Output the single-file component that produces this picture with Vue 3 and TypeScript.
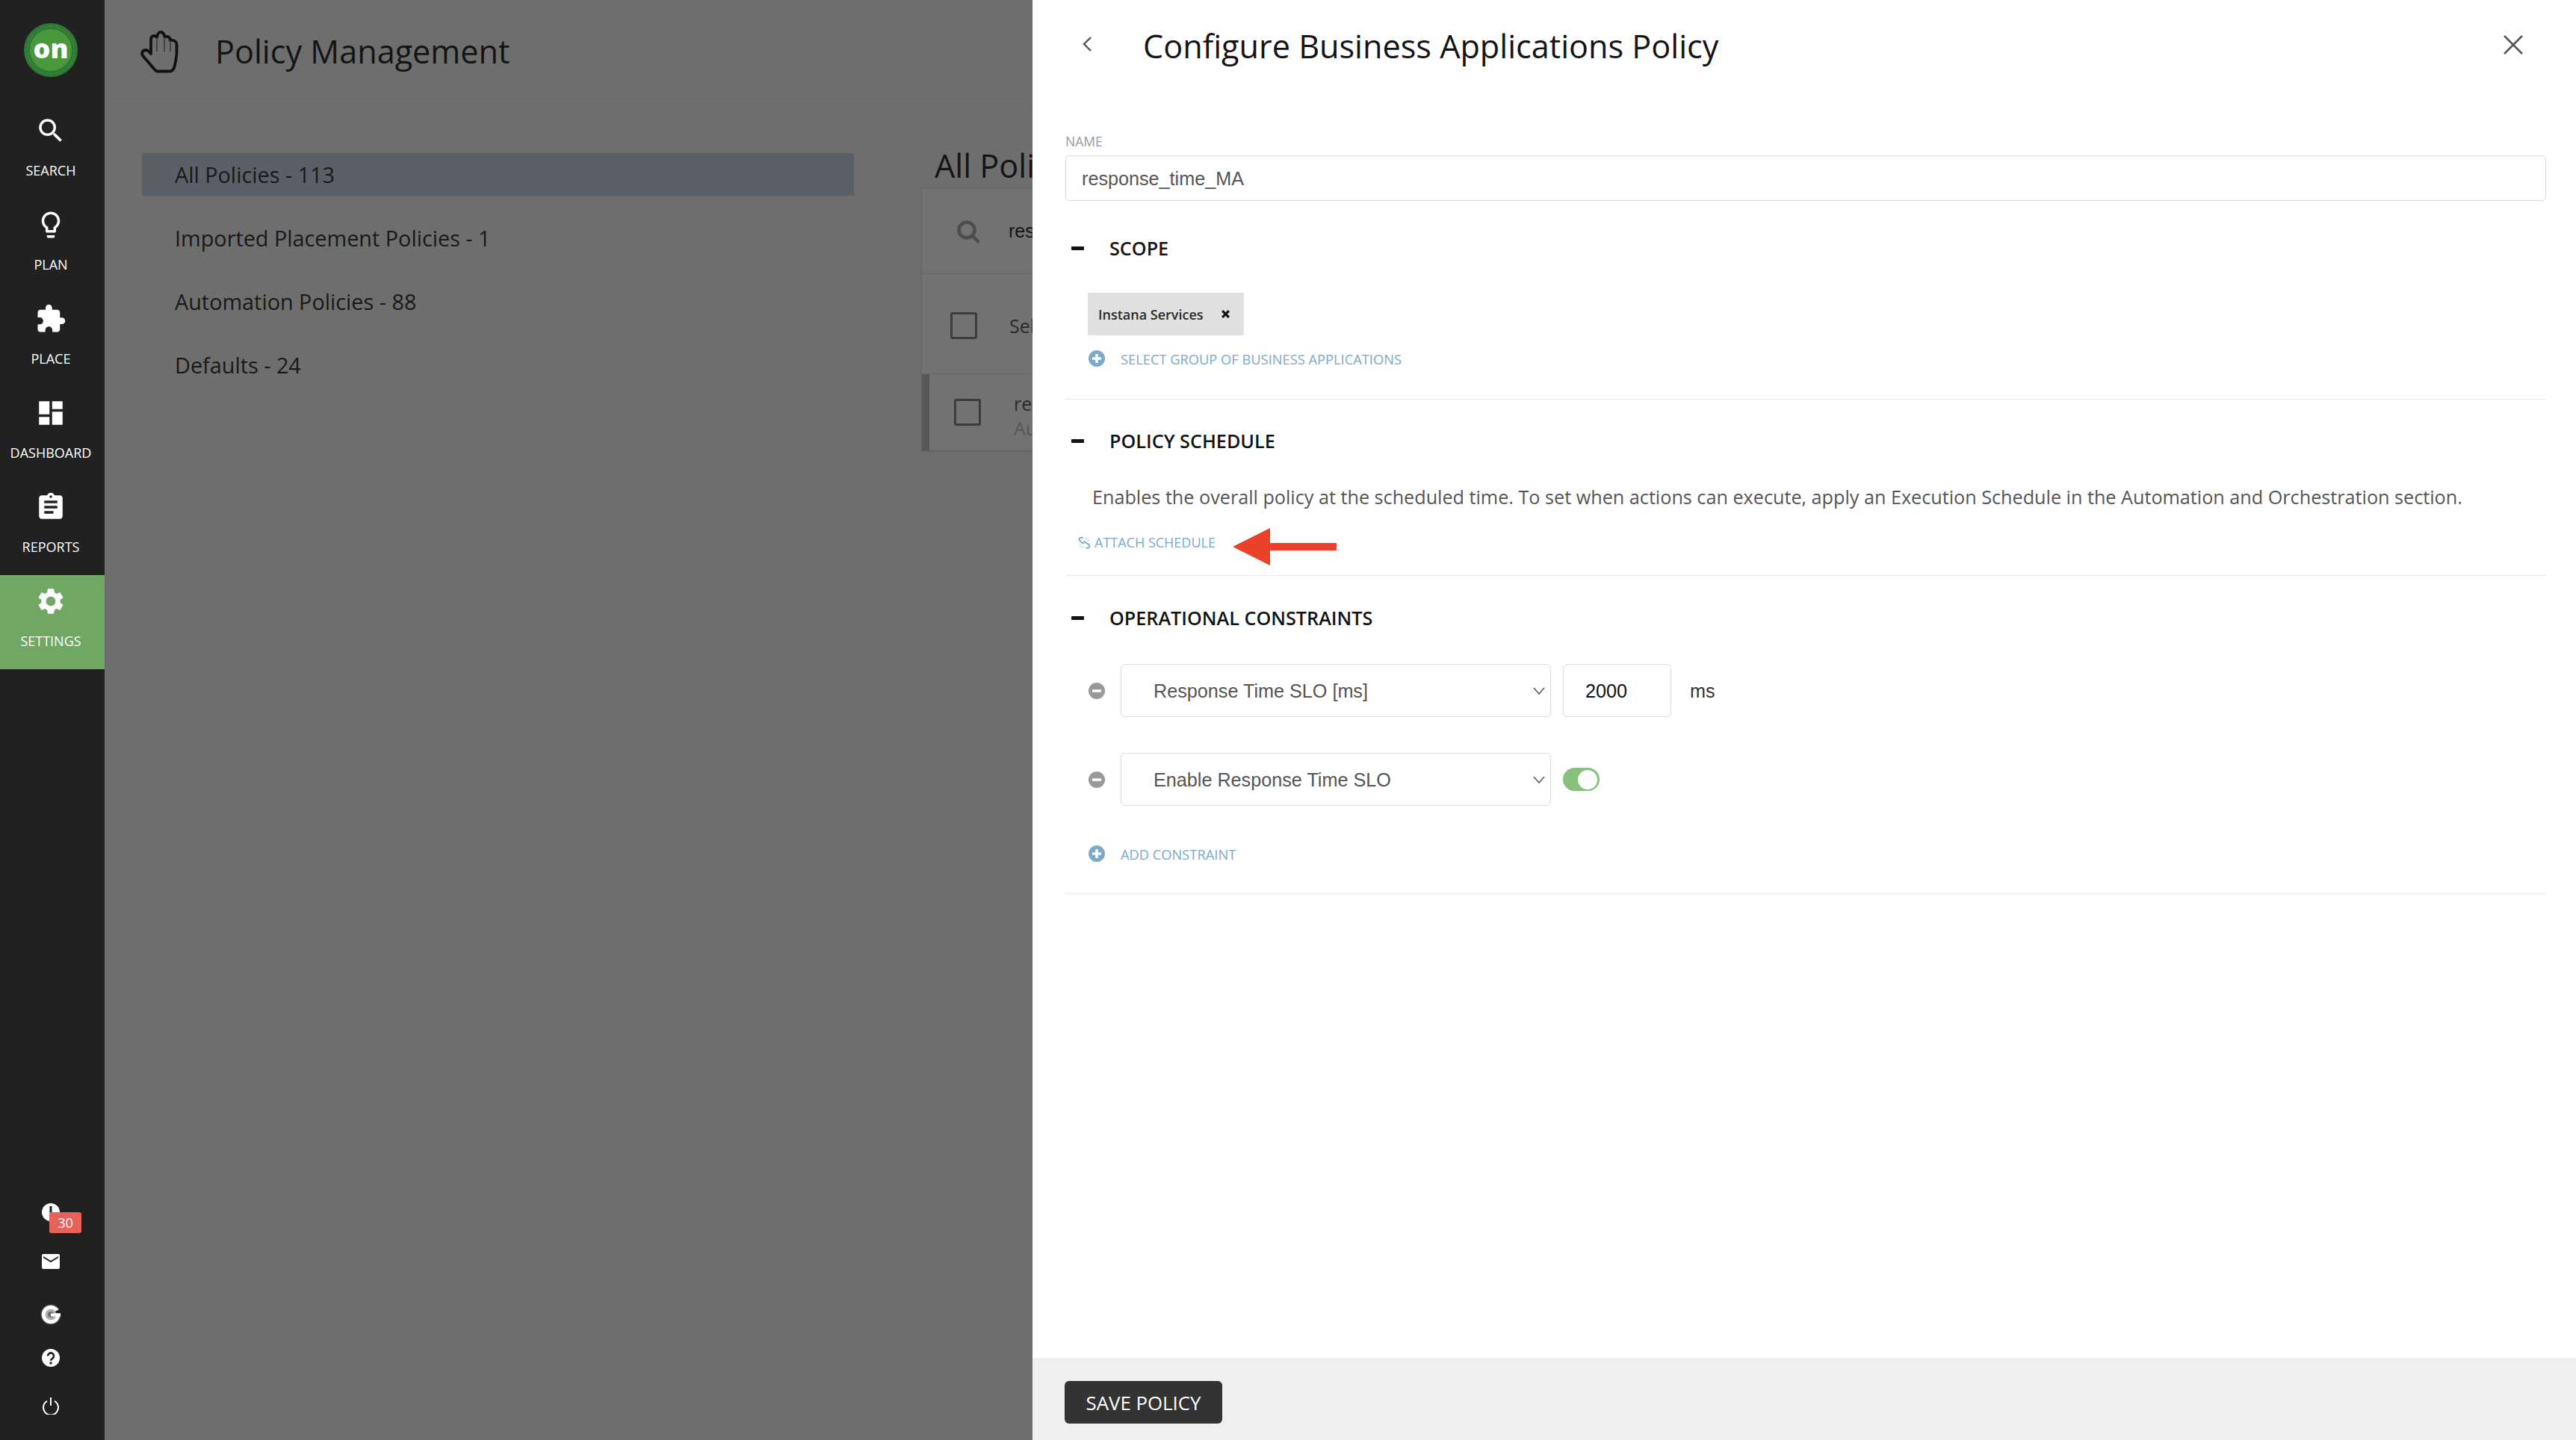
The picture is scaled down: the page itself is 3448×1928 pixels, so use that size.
<script setup lang="ts">
const navItems = [
  { label: 'SEARCH', d: 'M15.5 14h-.79l-.28-.27A6.471 6.471 0 0 0 16 9.5 6.5 6.5 0 1 0 9.5 16c1.61 0 3.09-.59 4.23-1.57l.27.28v.79l5 4.99L20.49 19l-4.99-5zm-6 0C7.01 14 5 11.99 5 9.5S7.01 5 9.5 5 14 7.01 14 9.5 11.99 14 9.5 14z' },
  { label: 'PLAN', d: 'M9 21c0 .55.45 1 1 1h4c.55 0 1-.45 1-1v-1H9v1zm3-19C8.14 2 5 5.14 5 9c0 2.38 1.19 4.47 3 5.74V17c0 .55.45 1 1 1h6c.55 0 1-.45 1-1v-2.26c1.81-1.27 3-3.36 3-5.74 0-3.86-3.14-7-7-7zm2.85 11.1l-.85.6V16h-4v-2.3l-.85-.6A4.997 4.997 0 0 1 7 9c0-2.76 2.24-5 5-5s5 2.24 5 5c0 1.63-.8 3.16-2.15 4.1z' },
  { label: 'PLACE', d: 'M20.5 11H19V7c0-1.1-.9-2-2-2h-4V3.5C13 2.12 11.88 1 10.5 1S8 2.12 8 3.5V5H4c-1.1 0-1.99.9-1.99 2v3.8H3.5c1.49 0 2.7 1.21 2.7 2.7s-1.21 2.7-2.7 2.7H2V20c0 1.1.9 2 2 2h3.8v-1.5c0-1.49 1.21-2.7 2.7-2.7 1.49 0 2.7 1.21 2.7 2.7V22H17c1.1 0 2-.9 2-2v-4h1.5c1.38 0 2.5-1.12 2.5-2.5S21.88 11 20.5 11z' },
  { label: 'DASHBOARD', d: 'M3 13h8V3H3v10zm0 8h8v-6H3v6zm10 0h8V11h-8v10zm0-18v6h8V3h-8z' },
  { label: 'REPORTS', d: 'M19 3h-4.18C14.4 1.84 13.3 1 12 1c-1.3 0-2.4.84-2.82 2H5c-1.1 0-2 .9-2 2v14c0 1.1.9 2 2 2h14c1.1 0 2-.9 2-2V5c0-1.1-.9-2-2-2zm-7 0c.55 0 1 .45 1 1s-.45 1-1 1-1-.45-1-1 .45-1 1-1zm2 14H7v-2h7v2zm3-4H7v-2h10v2zm0-4H7V7h10v2z' },
  { label: 'SETTINGS', active: true, d: 'M19.14 12.94c.04-.3.06-.61.06-.94 0-.32-.02-.64-.07-.94l2.03-1.58c.18-.14.23-.41.12-.61l-1.92-3.32c-.12-.22-.37-.29-.59-.22l-2.39.96c-.5-.38-1.03-.7-1.62-.94l-.36-2.54c-.04-.24-.24-.41-.48-.41h-3.84c-.24 0-.43.17-.47.41l-.36 2.54c-.59.24-1.13.57-1.62.94l-2.39-.96c-.22-.08-.47 0-.59.22L2.74 8.87c-.12.21-.08.47.12.61l2.03 1.58c-.05.3-.09.63-.09.94s.02.64.07.94l-2.03 1.58c-.18.14-.23.41-.12.61l1.92 3.32c.12.22.37.29.59.22l2.39-.96c.5.38 1.03.7 1.62.94l.36 2.54c.05.24.24.41.48.41h3.84c.24 0 .44-.17.47-.41l.36-2.54c.59-.24 1.13-.56 1.62-.94l2.39.96c.22.08.47 0 .59-.22l1.92-3.32c.12-.22.07-.47-.12-.61l-2.01-1.58zM12 15.6c-1.98 0-3.6-1.62-3.6-3.6s1.62-3.6 3.6-3.6 3.6 1.62 3.6 3.6-1.62 3.6-3.6 3.6z' },
];

const policyGroups = [
  { label: 'All Policies - 113', selected: true },
  { label: 'Imported Placement Policies - 1' },
  { label: 'Automation Policies - 88' },
  { label: 'Defaults - 24' },
];
</script>

<template>
  <div class="page">
    <nav class="sidebar">
      <div class="logo-wrap">
        <div class="logo"><span class="logo-text">on</span></div>
      </div>
      <a v-for="item in navItems" :key="item.label" class="nav-item" :class="{ active: item.active }">
        <svg class="nav-icon" viewBox="0 0 24 24"><path :d="item.d" fill="#fff" /></svg>
        <span class="nav-label">{{ item.label }}</span>
      </a>
      <div class="side-bottom">
        <div class="side-icon clock">
          <svg viewBox="0 0 24 24" width="24" height="24">
            <circle cx="12" cy="12" r="12" fill="#fff" />
            <rect x="10.5" y="4" width="3" height="9" fill="#212121" />
          </svg>
          <span class="badge">30</span>
        </div>
        <div class="side-icon mail">
          <svg viewBox="0 0 24 20" width="24" height="20">
            <rect width="24" height="20" rx="2" fill="#fff" />
            <path d="M2 4l10 6 10-6" fill="none" stroke="#212121" stroke-width="2" />
          </svg>
        </div>
        <div class="side-icon grammar">
          <svg viewBox="0 0 28 28" width="28" height="28">
            <circle cx="14" cy="14" r="13.5" fill="#555" />
            <circle cx="14" cy="14" r="12.2" fill="#fff" />
            <path d="M17 11L28 6v6.500H17z" fill="#212121" />
            <circle cx="14" cy="14" r="7.500" fill="#b0b0b0" />
            <circle cx="14" cy="14" r="4" fill="#6e6e6e" />
            <rect x="14" y="12.500" width="13" height="4" fill="#fff" />
          </svg>
        </div>
        <div class="side-icon help">
          <svg viewBox="0 0 24 24" width="24" height="24">
            <circle cx="12" cy="12" r="12" fill="#fff" />
            <path d="M8 9.5a4 4 0 1 1 6.2 3.3c-1.4.9-2.2 1.5-2.2 3" fill="none" stroke="#212121" stroke-width="2.6" />
            <rect x="10.5" y="17.5" width="3" height="3" fill="#212121" />
          </svg>
        </div>
        <div class="side-icon power">
          <svg viewBox="0 0 24 24" width="24" height="24">
            <path d="M7 5.8a10 10 0 1 0 10 0" fill="none" stroke="#fff" stroke-width="2" />
            <path d="M12 1v11" fill="none" stroke="#fff" stroke-width="2" />
          </svg>
        </div>
      </div>
    </nav>

    <main class="main">
      <header class="main-header">
        <svg class="hand" viewBox="0 0 52 57" width="52" height="57">
          <path
            d="M19 51L4.500 34C2.500 31.500 2.500 28.500 5 27c2.500-1.500 5.500-1 8 1.500l2 2.500V11c0-2.500 2-4 4-4 1.500 0 3 .5 4 2 .5-4 2.500-7 5-7 3 0 5 2.500 5 6 1-.5 2.500 0 3.500 0 2.500 0 4 2 4.500 5 1-.5 2-.5 3.500 0 3 .5 5 3 5 6v9c0 8-1.500 14-3 20-1 4-2.500 6.500-6.500 6.500H24c-2 0-3.500-1.500-5-3.500z"
            fill="none" stroke="#111" stroke-width="3.800" stroke-linejoin="round"
          />
          <path d="M23 9v19M33 8v20M41 13v15" fill="none" stroke="#333" stroke-width="1.400" />
        </svg>
        <h1 class="main-title">Policy Management</h1>
      </header>
      <div class="main-body">
        <ul class="groups">
          <li v-for="group in policyGroups" :key="group.label" class="group" :class="{ selected: group.selected }">
            {{ group.label }}
          </li>
        </ul>
        <!-- the drawer covers the rest of this list, only the visible start of each text is kept -->
        <section class="policies">
          <h2 class="policies-title">All Poli</h2>
          <div class="card">
            <div class="card-search">
              <svg viewBox="0 0 30 30" width="30" height="30">
                <circle cx="13" cy="13" r="10.500" fill="none" stroke="#4c4c4c" stroke-width="4.500" />
                <path d="M20.500 20.500L28 28" stroke="#4c4c4c" stroke-width="4.500" stroke-linecap="round" />
              </svg>
              <span class="search-text">res</span>
            </div>
            <div class="card-select">
              <span class="checkbox"></span>
              <span class="select-text">Sel</span>
            </div>
            <div class="card-row">
              <span class="checkbox"></span>
              <div class="row-text">
                <span class="row-name">re</span>
                <span class="row-type">Au</span>
              </div>
            </div>
          </div>
        </section>
      </div>
    </main>

    <aside class="panel">
      <header class="panel-header">
        <svg class="back" viewBox="0 0 14 22" width="14" height="22">
          <path d="M12 2L3 11l9 9" fill="none" stroke="#555" stroke-width="2.400" />
        </svg>
        <h2 class="panel-title">Configure Business Applications Policy</h2>
        <svg class="close" viewBox="0 0 28 28" width="28" height="28">
          <path d="M2 2l24 24M26 2L2 26" fill="none" stroke="#555" stroke-width="2.600" />
        </svg>
      </header>

      <div class="panel-body">
        <label class="field-label">NAME</label>
        <input class="name-input" type="text" value="response_time_MA" />

        <section class="section scope">
          <h3 class="section-head"><span class="minus"></span>SCOPE</h3>
          <div class="chip">
            <span>Instana Services</span>
            <svg viewBox="0 0 12 12" width="13" height="13">
              <path d="M2 2l8 8M10 2l-8 8" fill="none" stroke="#111" stroke-width="3" />
            </svg>
          </div>
          <a class="link">
            <svg class="circle-icon" viewBox="0 0 22 22" width="22" height="22">
              <circle cx="11" cy="11" r="11" fill="#7aa9cc" />
              <path d="M5 11h12M11 5v12" stroke="#fff" stroke-width="3.500" />
            </svg>
            SELECT GROUP OF BUSINESS APPLICATIONS
          </a>
        </section>

        <section class="section schedule">
          <h3 class="section-head"><span class="minus"></span>POLICY SCHEDULE</h3>
          <p class="desc">
            Enables the overall policy at the scheduled time. To set when actions can execute, apply an Execution
            Schedule in the Automation and Orchestration section.
          </p>
          <div class="attach-row">
            <a class="attach">
              <svg viewBox="0 0 17 17" width="17" height="17">
                <path
                  d="M6.500 2.500C4.500.8 1.800 2 1.500 4 1.300 5.500 2.500 6.500 4 7.500L8 10M7.500 6.500L11 9c1.500 1 4.500 2 4.500 4.500 0 2-3 3-5 1.500"
                  fill="none" stroke="#7aa9cc" stroke-width="1.800"
                />
                <path d="M10 1.500V4M13.500 2l-2 2.500M15.500 5l-3 1M1.500 11l3-.8M2.500 14.500l2.500-2M6 16l.5-2.800" fill="none" stroke="#a9c9e0" stroke-width="1" />
              </svg>
              ATTACH SCHEDULE
            </a>
            <svg class="arrow" viewBox="0 0 139 50" width="139" height="50">
              <path d="M0 25L50 0v20h89v10H50v20z" fill="#ea4128" />
            </svg>
          </div>
        </section>

        <section class="section constraints">
          <h3 class="section-head"><span class="minus"></span>OPERATIONAL CONSTRAINTS</h3>
          <div class="constraint first">
            <svg class="circle-icon" viewBox="0 0 22 22" width="22" height="22">
              <circle cx="11" cy="11" r="11" fill="#999" />
              <path d="M5 11h12" stroke="#fff" stroke-width="3.500" />
            </svg>
            <div class="select">
              <span>Response Time SLO [ms]</span>
              <svg viewBox="0 0 16 10" width="16" height="10">
                <path d="M1 1l7 8 7-8" fill="none" stroke="#555" stroke-width="1.500" />
              </svg>
            </div>
            <input class="num-input" type="text" value="2000" />
            <span class="unit">ms</span>
          </div>
          <div class="constraint">
            <svg class="circle-icon" viewBox="0 0 22 22" width="22" height="22">
              <circle cx="11" cy="11" r="11" fill="#999" />
              <path d="M5 11h12" stroke="#fff" stroke-width="3.500" />
            </svg>
            <div class="select">
              <span>Enable Response Time SLO</span>
              <svg viewBox="0 0 16 10" width="16" height="10">
                <path d="M1 1l7 8 7-8" fill="none" stroke="#555" stroke-width="1.500" />
              </svg>
            </div>
            <span class="toggle"><span class="knob"></span></span>
          </div>
          <a class="link add">
            <svg class="circle-icon" viewBox="0 0 22 22" width="22" height="22">
              <circle cx="11" cy="11" r="11" fill="#7aa9cc" />
              <path d="M5 11h12M11 5v12" stroke="#fff" stroke-width="3.500" />
            </svg>
            ADD CONSTRAINT
          </a>
        </section>
      </div>

      <footer class="panel-footer">
        <button class="save" type="button">SAVE POLICY</button>
      </footer>
    </aside>
  </div>
</template>

<style>
html,
body {
  margin: 0;
  padding: 0;
  background: #6e6e6e;
}
</style>

<style scoped>
* {
  box-sizing: border-box;
}

.page {
  position: relative;
  display: flex;
  width: 3448px;
  height: 1928px;
  overflow: hidden;
  font-family: 'Open Sans', 'Liberation Sans', sans-serif;
  background: #6e6e6e;
}

.sidebar {
  display: flex;
  flex-direction: column;
  width: 140px;
  flex: none;
  background: #212121;
}

.logo-wrap {
  display: flex;
  justify-content: center;
  height: 140px;
  padding: 31px 4px 0 0;
}

.logo {
  display: flex;
  align-items: center;
  justify-content: center;
  width: 72px;
  height: 72px;
  border-radius: 50%;
  background: #4a983c;
  border: 8px solid #2e7a35;
  outline: 1px dashed rgba(255, 255, 255, 0.15);
  outline-offset: -5px;
}

.logo-text {
  color: #fff;
  font-size: 36px;
  font-weight: 800;
  line-height: 1;
  margin-top: -5px;
}

.nav-item {
  display: flex;
  flex-direction: column;
  align-items: center;
  height: 126px;
  padding: 14px 4px 0 0;
}

.nav-item.active {
  background: #70a763;
}

.nav-icon {
  width: 42px;
  height: 42px;
  flex: none;
}

.nav-label {
  margin-top: 20px;
  font-size: 18px;
  line-height: 24px;
  color: #fff;
}

.side-bottom {
  position: relative;
  margin-top: auto;
  display: flex;
  flex-direction: column;
  height: 317px;
}

.side-icon {
  position: relative;
  display: flex;
  justify-content: center;
  width: 136px;
  height: 24px;
}

.mail {
  margin-top: 44px;
}

.grammar {
  margin-top: 43px;
}

.help {
  margin-top: 36px;
}

.power {
  margin-top: 40px;
}

.badge {
  position: absolute;
  left: 66px;
  top: 12px;
  width: 43px;
  height: 28px;
  border-radius: 3px;
  background: #e8625a;
  color: #fff;
  font-size: 18px;
  line-height: 28px;
  text-align: center;
}

.main {
  flex: 1;
  min-width: 0;
  display: flex;
  flex-direction: column;
}

.main-header {
  display: flex;
  align-items: center;
  height: 139px;
  padding-left: 47px;
  border-bottom: 1px solid #686868;
}

.main-title {
  margin: 0 0 2px 49px;
  font-size: 43.2px;
  font-weight: 400;
  color: #141414;
}

.main-body {
  display: flex;
  padding: 66px 0 0 50px;
}

.groups {
  list-style: none;
  width: 953px;
  margin: 0;
  padding: 0;
}

.group {
  height: 57px;
  margin-bottom: 28px;
  padding-left: 44px;
  font-size: 28.8px;
  line-height: 57px;
  color: #181818;
}

.group.selected {
  background: #5b6068;
}

.policies {
  width: 1000px;
  margin-left: 91px;
  margin-top: -5px;
}

.policies-title {
  margin: 0 0 9px 17px;
  font-size: 43.2px;
  font-weight: 400;
  line-height: 44px;
  color: #141414;
}

.card {
  width: 1000px;
  background: #727272;
  box-shadow: 0 1px 3px rgba(0, 0, 0, 0.18);
}

.card-search {
  display: flex;
  align-items: center;
  height: 114px;
  padding-left: 47px;
  border-bottom: 1px solid #696969;
}

.search-text {
  margin-left: 39px;
  font-family: 'Liberation Sans', sans-serif;
  font-size: 25px;
  color: #141414;
}

.card-select {
  display: flex;
  align-items: center;
  height: 134px;
  padding: 4px 0 0 38px;
  border-bottom: 1px solid #696969;
}

.select-text {
  margin-left: 43px;
  font-size: 25px;
  color: #2a2a2a;
}

.card-row {
  display: flex;
  align-items: center;
  height: 102px;
  padding-left: 33px;
  border-left: 10px solid #575757;
}

.checkbox {
  width: 36px;
  height: 36px;
  flex: none;
  border: 3px solid #3c3c3c;
  border-radius: 3px;
}

.row-text {
  display: flex;
  flex-direction: column;
  margin: 9px 0 0 44px;
  font-size: 25px;
  line-height: 33px;
}

.row-name {
  color: #2a2a2a;
}

.row-type {
  color: #565656;
}

.panel {
  position: absolute;
  top: 0;
  right: 0;
  bottom: 0;
  left: 1382px;
  display: flex;
  flex-direction: column;
  background: #fff;
}

.panel-header {
  display: flex;
  align-items: center;
  height: 124px;
  padding: 0 70px 0 66px;
}

.back {
  flex: none;
  margin-top: -6px;
}

.panel-title {
  flex: 1;
  margin: 0 0 2px 68px;
  font-size: 43.2px;
  font-weight: 400;
  color: #141414;
}

.close {
  flex: none;
  margin-top: -4px;
}

.panel-body {
  flex: 1;
  min-height: 0;
  padding: 55px 40px 0 44px;
}

.field-label {
  display: block;
  font-size: 17.5px;
  line-height: 20px;
  color: #999;
}

.name-input {
  display: block;
  width: 100%;
  height: 61px;
  margin-top: 9px;
  padding: 2px 21px 0;
  border: 1px solid #d8dadd;
  border-radius: 6px;
  outline: none;
  font-family: 'Liberation Sans', sans-serif;
  font-size: 25.2px;
  color: #555;
}

.section {
  border-bottom: 1px solid #e6e6e6;
}

.section-head {
  display: flex;
  align-items: center;
  height: 40px;
  margin: 0;
  font-size: 25.2px;
  font-weight: 600;
  color: #141414;
}

.minus {
  width: 17px;
  height: 5px;
  margin: 0 34px 0 8px;
  background: #141414;
  border-radius: 1px;
}

.scope {
  padding: 43px 0 42px;
}

.schedule {
  padding: 35px 0 32px;
}

.constraints {
  padding: 36px 0 41px;
}

.chip {
  display: inline-flex;
  align-items: center;
  gap: 23px;
  height: 57px;
  margin: 40px 0 0 30px;
  padding: 0 18px 0 14px;
  background: #e0e0e0;
  border-radius: 2px;
  font-size: 18px;
  font-weight: 600;
  color: #2a2a2a;
}

.link {
  display: flex;
  align-items: center;
  height: 24px;
  padding-left: 31px;
  font-size: 18.3px;
  color: #7aa9cc;
}

.scope .link {
  margin-top: 19px;
}

.add {
  margin-top: 52px;
}

.circle-icon {
  flex: none;
  margin-right: 21px;
}

.desc {
  margin: 37px 0 0 36px;
  font-size: 25.2px;
  line-height: 36px;
  white-space: nowrap;
  color: #555;
}

.attach-row {
  display: flex;
  align-items: center;
  height: 24px;
  margin-top: 31px;
  padding-left: 17px;
}

.attach {
  display: flex;
  align-items: center;
  gap: 5px;
  font-size: 18px;
  color: #7aa9cc;
}

.arrow {
  flex: none;
  margin: 12px 0 0 23px;
}

.constraint {
  display: flex;
  align-items: center;
  height: 71px;
  margin-top: 48px;
  padding-left: 31px;
}

.constraint.first {
  margin-top: 42px;
}

.select {
  display: flex;
  align-items: center;
  justify-content: space-between;
  width: 576px;
  height: 71px;
  padding: 2px 7px 0 43px;
  border: 1px solid #dcdcdc;
  border-radius: 6px;
  font-family: 'Liberation Sans', sans-serif;
  font-size: 25.2px;
  color: #555;
}

.select svg {
  margin-top: -2px;
}

.num-input {
  width: 145px;
  height: 71px;
  margin-left: 16px;
  padding: 2px 29px 0;
  border: 1px solid #dcdcdc;
  border-radius: 6px;
  outline: none;
  font-family: 'Liberation Sans', sans-serif;
  font-size: 25.2px;
  color: #111;
}

.unit {
  margin: 2px 0 0 25px;
  font-family: 'Liberation Sans', sans-serif;
  font-size: 25.2px;
  color: #333;
}

.toggle {
  display: flex;
  justify-content: flex-end;
  align-items: center;
  width: 49px;
  height: 31px;
  margin-left: 16px;
  padding-right: 3px;
  border-radius: 16px;
  background: #85c17a;
}

.knob {
  width: 26px;
  height: 26px;
  border-radius: 50%;
  background: #fff;
}

.panel-footer {
  flex: none;
  height: 109px;
  padding: 29px 0 0 43px;
  background: #f0f0f0;
  border-top: 1px solid #e8e8e8;
}

.save {
  display: block;
  width: 211px;
  height: 57px;
  border: none;
  border-radius: 6px;
  background: #333;
  color: #fff;
  font-family: 'Open Sans', sans-serif;
  font-size: 25.8px;
  padding: 0;
}
</style>
